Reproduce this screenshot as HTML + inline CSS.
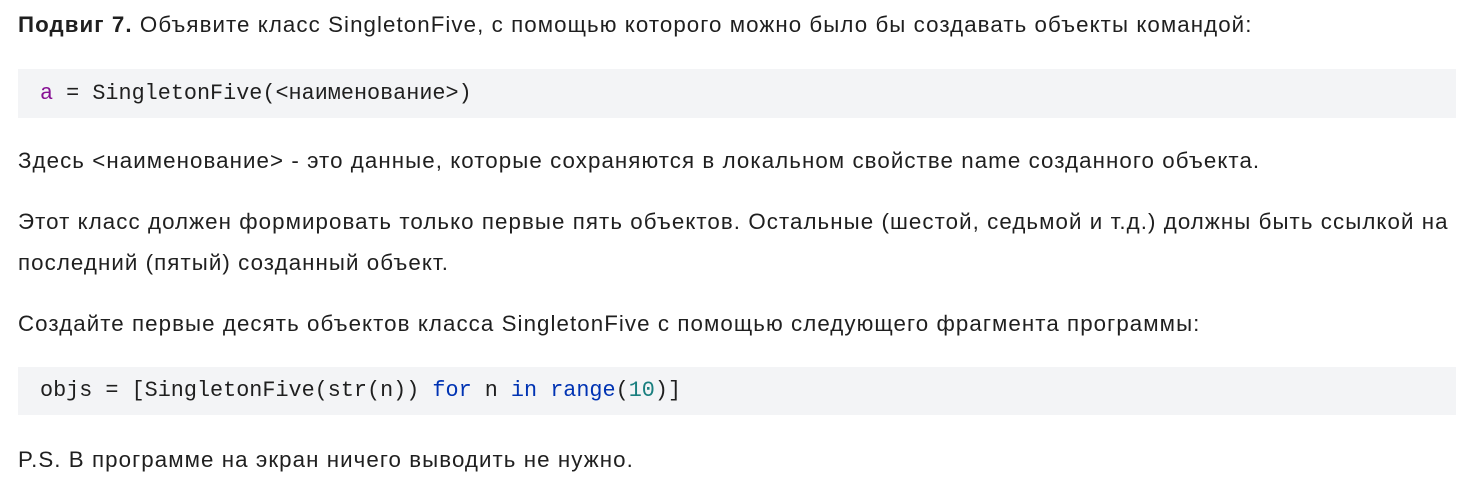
<!DOCTYPE html>
<html><head><meta charset="utf-8"><style>
html,body{margin:0;padding:0;background:#fff;width:1470px;height:492px;overflow:hidden}
body{font-family:"Liberation Sans",sans-serif;font-size:22.3px;letter-spacing:1.07px;color:#1f1f1f;position:relative}
.t{position:absolute;left:18px;white-space:nowrap;line-height:24px}
.c{position:absolute;left:18px;width:1438px;background:#f3f4f6;font-family:"Liberation Mono",monospace;font-size:21.8px;letter-spacing:0;color:#1f1f1f;box-sizing:border-box;padding-left:22px;white-space:pre}
.k{color:#0033b3}.v{color:#871094}.n{color:#1a7f7f}
</style></head><body>
<div class="t" style="top:13px"><b>Подвиг 7.</b> Объявите класс SingletonFive, с помощью которого можно было бы создавать объекты командой:</div>
<div class="c" style="top:69px;height:49px;line-height:49px"><span class="v">a</span> = SingletonFive(&lt;наименование&gt;)</div>
<div class="t" style="top:149px">Здесь &lt;наименование&gt; - это данные, которые сохраняются в локальном свойстве name созданного объекта.</div>
<div class="t" style="top:210px">Этот класс должен формировать только первые пять объектов. Остальные (шестой, седьмой и т.д.) должны быть ссылкой на</div>
<div class="t" style="top:251px">последний (пятый) созданный объект.</div>
<div class="t" style="top:312px">Создайте первые десять объектов класса SingletonFive с помощью следующего фрагмента программы:</div>
<div class="c" style="top:367px;height:48px;line-height:48px">objs = [SingletonFive(str(n)) <span class="k">for</span> n <span class="k">in</span> <span class="k">range</span>(<span class="n">10</span>)]</div>
<div class="t" style="top:448px">P.S. В программе на экран ничего выводить не нужно.</div>
</body></html>
